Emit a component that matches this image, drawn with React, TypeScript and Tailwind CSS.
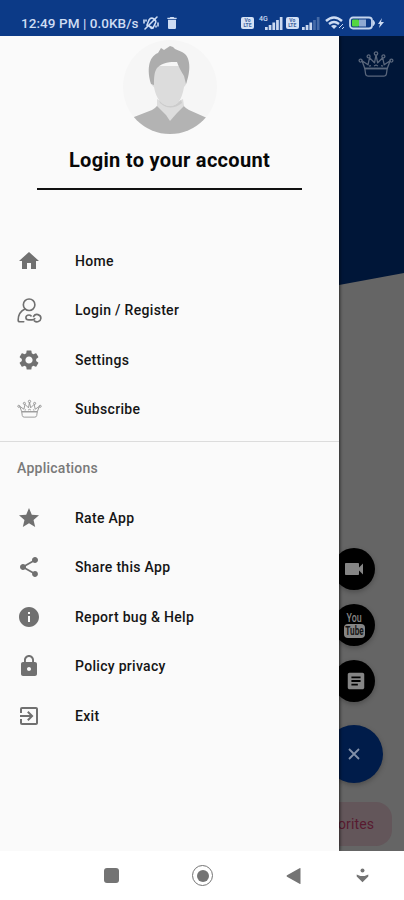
import React from "react";
import {
  MdHome,
  MdSettings,
  MdStar,
  MdShare,
  MdInfo,
  MdLock,
  MdExitToApp,
  MdVideocam,
  MdArticle,
  MdDelete,
} from "react-icons/md";

function Crown({ className }: { className: string }) {
  return (
    <svg viewBox="0 0 36 27" className={className} fill="none" stroke="currentColor" strokeWidth="1.3" strokeLinejoin="round">
      <path d="M6.8 17.5 4 9.8l6 4 1.5-7 5 5L18 4l1.7 7.8 5-5 1.5 7 6-4L29.2 17.5Z" />
      <path d="M6.8 17.5 7.6 23q.4 2.2 2.8 2.2h15.2q2.4 0 2.8-2.2l.8-5.5Z" />
      <circle cx="2.6" cy="9.6" r="1.5" />
      <circle cx="10.6" cy="5.4" r="1.5" />
      <circle cx="18" cy="2.6" r="1.7" />
      <circle cx="25.4" cy="5.4" r="1.5" />
      <circle cx="33.4" cy="9.6" r="1.5" />
      <path d="M11 15.2l2-.6m3 .4 2-1 2 1m3-.4 2 .6" />
    </svg>
  );
}

function UserLink() {
  return (
    <svg viewBox="0 1 26 26" className="h-[25px] w-[25px] shrink-0" fill="none" stroke="currentColor" strokeWidth="1.7" strokeLinecap="round" strokeLinejoin="round">
      <circle cx="12.6" cy="8" r="6" />
      <path d="M8.2 12.4C4 14.4 1.3 18 1.2 23.8q0 1.9 1.8 1.9h4" />
      <path d="M14.6 19.6q-.8-.9-2.2-.9c-4.2 0-4.2 5 0 5h3.4c1.6 0 2.2-.4 2.7-1.2" />
      <path d="M17.2 20.2c1.2-2 3-2.4 4.6-1.9 2 .6 3.2 2.1 3 4-.3 3.4-4.4 4.4-6.8 2.4" />
    </svg>
  );
}

function Avatar() {
  return (
    <svg viewBox="0 0 96 96" className="h-24 w-24">
      <defs>
        <clipPath id="avatar-round">
          <circle cx="48" cy="48" r="47" />
        </clipPath>
      </defs>
      <g clipPath="url(#avatar-round)">
        <rect width="96" height="96" fill="#f6f6f6" />
        <path d="M12 78 30 71q6-3 7-9h22q2 6 8 9l18 8v17H12Z" fill="#b3b3b3" />
        <path d="M35 60q12 8 26 0l1 7-7 7-7 8-4-6-9-9Z" fill="#dddddd" />
        <path d="M37 61q11 12 22 0l1 3q-12 9-22 0Z" fill="#cccccc" />
        <path d="M31 27h32l2 16q-1 3-3 5c-2 12-6 19-14 19S34 60 32 48q-3-2-3-6Z" fill="#dcdcdc" />
        <path d="M29 45c-4-13-3-27 7-31l3-5 3 2 6-4 3 1 2 2 7 3c9 4 9 19 4 32l-2-8q-5-8-7-14c-7 0-14 0-20 6-3 4-3 11-3 17Z" fill="#adadad" />
      </g>
    </svg>
  );
}

function Signal({ strong }: { strong: boolean }) {
  return (
    <svg viewBox="0 0 18 13" className="h-[13px] w-[18px]" fill="#cbd9f1">
      <rect x="0" y="10" width="2.7" height="3" />
      <rect x="3.7" y="8" width="2.7" height="5" />
      <rect x="7.4" y="5.5" width="2.7" height="7.5" />
      <rect x="11.1" y="3" width="2.7" height="10" opacity={strong ? 1 : 0.3} />
      <rect x="14.8" y="0" width="2.7" height="13" opacity={strong ? 1 : 0.3} />
    </svg>
  );
}

function VolteBadge() {
  return (
    <span className="flex h-3 w-[13px] flex-col items-center justify-center rounded-[2px] bg-[#d5e1f5] text-[5px] leading-[5px] font-bold text-[#3d639f]">
      <span>Vo</span>
      <span>LTE</span>
    </span>
  );
}

function StatusBar() {
  return (
    <header className="flex h-9 shrink-0 items-start bg-[#0c3a87] pt-[15px] pl-[21px] text-[#cedcf3]">
      <span className="w-[119px] text-[13.5px] leading-4 font-medium tracking-[0.06px] whitespace-nowrap">12:49 PM | 0.0KB/s</span>
      <svg viewBox="0 0 18 16" className="ml-[2px] h-4 w-[18px]" fill="none" stroke="currentColor" strokeWidth="1.6" strokeLinecap="round">
        <path d="m5 10 2-5q2-3 5-1 3 2 1 5l-2 4Zm3 2q1 2 3 1M3 14 15 2M2 5v3m14 0v3M4 5v1m10 5v1" />
      </svg>
      <MdDelete className="ml-[4px] h-4 w-4" />
      <div className="ml-[61px] flex h-4 items-center">
        <VolteBadge />
        <div className="ml-[5px] flex items-start">
          <span className="-mt-0.5 text-[7px] leading-[8px] font-medium">4G</span>
          <span className="-ml-[3px]"><Signal strong /></span>
        </div>
        <span className="ml-[3px]"><VolteBadge /></span>
        <span className="ml-[3px]"><Signal strong={false} /></span>
        <svg viewBox="0 0 20 14" className="ml-[5px] h-[14px] w-5" fill="none" stroke="currentColor" strokeWidth="2.4">
          <path d="M1 5q8-7 16 0M4 8q5-4 10 0" />
          <path d="m6 10 3 3 3-3q-3-2-6 0Z" fill="currentColor" stroke="none" />
          <path d="m14 12 4-4m-1 5 2-2" strokeWidth="1" />
        </svg>
        <svg viewBox="0 0 27 14" className="ml-[4px] h-[14px] w-[27px]">
          <rect x="1" y="1.5" width="22" height="11" rx="3" fill="none" stroke="#c5d5ee" strokeWidth="1.8" />
          <rect x="3" y="3.5" width="7" height="7" rx="1" fill="#55d641" />
          <rect x="10" y="3.5" width="7" height="7" fill="#8fa9d2" />
          <path d="M24.5 4.5q2 2.5 0 5Z" fill="#c5d5ee" stroke="#c5d5ee" />
        </svg>
        <svg viewBox="0 0 6 12" className="ml-[2px] h-3 w-1.5" fill="currentColor">
          <path d="M4 1 0 7h2l-1 4 5-6H3Z" />
        </svg>
      </div>
    </header>
  );
}

function MenuItem({ icon, label }: { icon: React.ReactNode; label: string }) {
  return (
    <a className="flex h-[49.5px] items-center pl-[17px]">
      <span className="flex w-[58px] items-center text-[#707070]">{icon}</span>
      <span className="text-sm font-medium tracking-[0.3px] text-[#151515]">{label}</span>
    </a>
  );
}

function Drawer() {
  return (
    <aside className="z-10 flex w-[339px] shrink-0 flex-col bg-[#fafafa] shadow-[1px_0_3px_rgba(0,0,0,0.6)]">
      <div className="flex flex-col items-center pt-[3px]">
        <Avatar />
        <h1 className="mt-3 text-xl leading-[26px] font-bold tracking-[0.32px] text-[#080808]">Login to your account</h1>
        <div className="mt-[15px] h-[2px] w-[265px] bg-[#111]" />
      </div>
      <nav className="pt-[46.2px]">
        <MenuItem icon={<MdHome className="h-6 w-6" />} label="Home" />
        <MenuItem icon={<UserLink />} label="Login / Register" />
        <MenuItem icon={<MdSettings className="h-6 w-6" />} label="Settings" />
        <MenuItem icon={<Crown className="h-5 w-[25px] text-[#929292]" />} label="Subscribe" />
        <div className="mt-[7px] h-px bg-[#dcdcdc]" />
        <p className="pt-[15.8px] pb-[15px] pl-[17px] text-sm font-medium tracking-[0.25px] text-[#797979]">Applications</p>
        <MenuItem icon={<MdStar className="h-6 w-6" />} label="Rate App" />
        <MenuItem icon={<MdShare className="h-6 w-6" />} label="Share this App" />
        <MenuItem icon={<MdInfo className="h-6 w-6" />} label="Report bug & Help" />
        <MenuItem icon={<MdLock className="h-6 w-6" />} label="Policy privacy" />
        <MenuItem icon={<MdExitToApp className="h-6 w-6" />} label="Exit" />
      </nav>
    </aside>
  );
}

function Fab({ children }: { children: React.ReactNode }) {
  return (
    <span className="-ml-[6px] flex h-[42px] w-[42px] items-center justify-center rounded-full bg-black text-[#858585] shadow-[0_2px_5px_rgba(0,0,0,0.25)]">
      {children}
    </span>
  );
}

function Backdrop() {
  return (
    <main className="flex min-w-0 grow flex-col overflow-hidden bg-[#656565]">
      <div className="flex h-[250px] shrink-0 justify-center bg-[#001638] pt-[15px] pl-[9px] [clip-path:polygon(0_0,100%_0,100%_237px,0_249px)]">
        <Crown className="h-[27px] w-9 text-[#5a677c]" />
      </div>
      <div className="mt-[262px] flex flex-col gap-[14px]">
        <Fab><MdVideocam className="h-6 w-6" /></Fab>
        <Fab>
          <span className="ml-px flex flex-col items-center font-bold">
            <span className="origin-bottom scale-x-[0.68] text-[13px] leading-[12px] font-medium">You</span>
            <span className="flex h-[14px] w-[21px] items-center justify-center rounded-[4px] bg-[#858585] text-[12px] leading-[14px] text-[#151515]">
              <span className="scale-x-[0.68]">Tube</span>
            </span>
          </span>
        </Fab>
        <Fab><MdArticle className="ml-1 h-[22px] w-[22px]" /></Fab>
      </div>
      <span className="mt-[23px] -ml-[14px] flex h-[58px] w-[58px] shrink-0 items-center justify-center rounded-full bg-[#001c4a] text-[#8290a8] shadow-[0_2px_5px_rgba(0,0,0,0.25)]">
        <svg viewBox="0 0 12 12" className="h-3 w-3" stroke="currentColor" strokeWidth="1.8">
          <path d="m1 1 10 10M11 1 1 11" />
        </svg>
      </span>
      <span className="mt-[19px] -ml-[60px] flex h-11 w-[113px] shrink-0 items-center justify-end rounded-[16px] bg-[#63565a] pr-[18px] text-sm tracking-[0.1px] text-[#581a30]">
        Favorites
      </span>
    </main>
  );
}

function NavigationBar() {
  return (
    <footer className="flex h-[49px] shrink-0 items-center bg-white pl-[104px] text-[#747474]">
      <span className="h-[15px] w-[15px] rounded-[3px] bg-[#747474]" />
      <span className="ml-[73px] flex h-[21px] w-[21px] items-center justify-center rounded-full border-[1.5px] border-[#747474]">
        <span className="h-3 w-3 rounded-full bg-[#747474]" />
      </span>
      <svg viewBox="0 0 15 18" className="ml-[73px] h-[18px] w-[15px]" fill="currentColor">
        <path d="M14.5 1.5v15q0 1-1 .3L1 9.7q-1-.7 0-1.4L13.5 1.2q1-.6 1 .3Z" />
      </svg>
      <svg viewBox="0 0 13 15" className="ml-[55px] h-[15px] w-[13px]" fill="currentColor">
        <circle cx="6.5" cy="2.6" r="2" />
        <path d="M.7 6.4 4.4 8h4.2l3.7-1.6v2.2L6.5 14.2.7 8.6Z" />
      </svg>
    </footer>
  );
}

export default function App() {
  return (
    <div className="flex h-[900px] w-[404px] flex-col overflow-hidden bg-white font-[Roboto,sans-serif]">
      <StatusBar />
      <div className="flex h-[815px] shrink-0 overflow-hidden">
        <Drawer />
        <Backdrop />
      </div>
      <NavigationBar />
    </div>
  );
}
